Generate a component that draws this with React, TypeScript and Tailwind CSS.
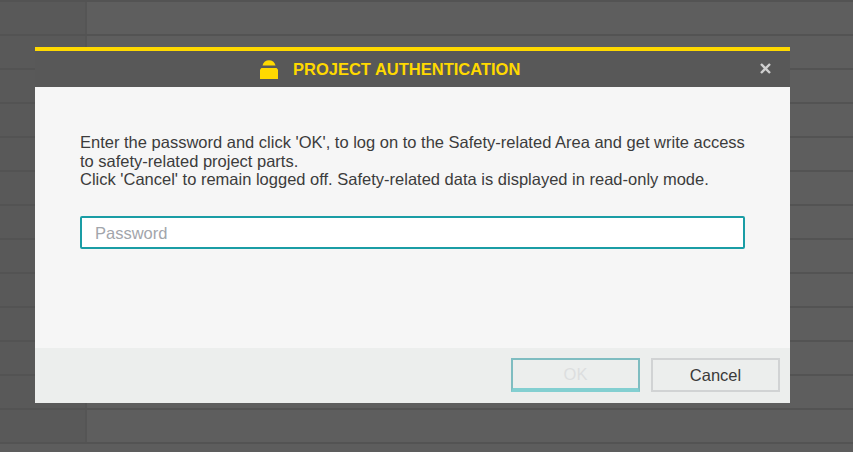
import React from 'react';

const rows = Array.from({ length: 13 });

const LockIcon: React.FC = () => (
    <svg width="18" height="19" viewBox="0 0 18 19" className="shrink-0">
        <path d="M2.5 5.5C3.2 2 6 0.3 9 0.3s5.8 1.7 6.5 5.2z" fill="#ffd900" />
        <path d="M1.5 8h15L18 9.5V19H0V9.5z" fill="#ffd900" />
    </svg>
);

const App: React.FC = () => {
    return (
        <div className="relative h-[452px] w-[853px] overflow-hidden bg-[#5d5d5d] font-['Liberation_Sans',Arial,sans-serif]">
            {/* table behind the dialog */}
            <div className="flex flex-col border-t-2 border-[#535353]">
                {rows.map((_, i) => (
                    <div key={i} className="flex h-[34px] shrink-0 border-b-2 border-[#535353]">
                        <div className="w-[87px] shrink-0 border-r-2 border-[#555555] bg-[#595959]" />
                        <div className="flex-1 bg-[#5e5e5e]" />
                    </div>
                ))}
            </div>

            <div className="absolute left-[35px] top-[47px] flex h-[356px] w-[755px] flex-col border-t-4 border-[#ffd900] bg-[#f6f6f6]">
                <div className="relative flex h-9 shrink-0 items-center bg-[#585858] pl-[225px]">
                    <LockIcon />
                    <h1 className="ml-[15px] text-[16.5px] font-bold text-[#ffd900]">
                        PROJECT AUTHENTICATION
                    </h1>
                    <button className="absolute right-[18px] top-[11px] text-[#cfcfcf]">
                        <svg width="13" height="13" viewBox="0 0 13 13" className="block">
                            <path d="M2 2l9 9M11 2l-9 9" stroke="currentColor" strokeWidth="2.4" />
                        </svg>
                    </button>
                </div>

                <div className="flex flex-1 flex-col px-[45px] pt-[46px]">
                    <p className="text-[16.5px] leading-[18.5px] text-[#3c3c3c]">
                        Enter the password and click 'OK', to log on to the Safety-related Area and get write access to safety-related project parts.
                        <br />
                        Click 'Cancel' to remain logged off. Safety-related data is displayed in read-only mode.
                    </p>
                    <input
                        type="password"
                        placeholder="Password"
                        className="mt-[27px] h-[33px] w-full rounded-[2px] border-2 border-[#1a9da5] bg-white px-[13px] pt-[2px] text-[16.5px] outline-none placeholder:text-[#a2a5ab]"
                    />
                </div>

                <div className="flex h-[55px] shrink-0 items-start justify-end gap-[11px] bg-[#eceeed] pr-[10px] pt-[10px]">
                    <button className="h-[34px] w-[129px] border-2 border-b-[4px] border-[#7fbdc1] border-b-[#83cfd1] text-[16.5px] text-[#dcdedf]">
                        OK
                    </button>
                    <button className="h-[34px] w-[129px] border-2 border-[#d1d3d4] text-[16.5px] text-[#3a3a3a]">
                        Cancel
                    </button>
                </div>
            </div>
        </div>
    );
};

export default App;
